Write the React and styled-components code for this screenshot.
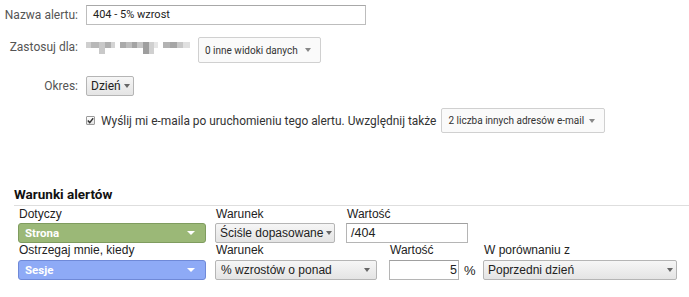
import React from 'react';
import styled, { createGlobalStyle } from 'styled-components';

const Global = createGlobalStyle`
  html, body {
    margin: 0;
    padding: 0;
    background: #fff;
  }
  body {
    font-family: Roboto, "Liberation Sans", Arial, sans-serif;
    width: 689px;
    height: 297px;
    overflow: hidden;
  }
`

const Page = styled.div`
  width: 689px;
  padding-top: 5px;
`
const Form = styled.div`
  display: flex;
  flex-direction: column;
`
const Row = styled.div`
  display: flex;
  align-items: center;
  height: ${p => p.h}px;
  margin-bottom: ${p => p.mb || 0}px;
`
const Label = styled.div`
  width: 78px;
  text-align: right;
  font-size: 12px;
  color: #555;
  margin-right: 8px;
  flex-shrink: 0;
  white-space: nowrap;
  align-self: ${p => p.top ? 'flex-start' : 'auto'};
  padding-top: ${p => p.top ? 3 : 0}px;
`
const TextInput = styled.div`
  width: 280px;
  height: 20px;
  box-sizing: border-box;
  border: 1px solid #bdbdbd;
  border-top-color: #a8a8a8;
  padding: 0 6px;
  font-size: 11px;
  line-height: 18px;
  color: #222;
`
const Blurred = styled.div`
  display: flex;
  align-items: flex-start;
  width: 104px;
  height: 20px;
  margin-right: 8px;
  padding-top: 2px;
  box-sizing: border-box;
`
const Pix = styled.span`
  display: block;
  flex-shrink: 0;
  width: ${p => p.w}px;
  height: ${p => p.h || 6}px;
  background: ${p => p.c};
`
const FlatDrop = styled.div`
  display: flex;
  align-items: center;
  box-sizing: border-box;
  height: ${p => p.h}px;
  width: ${p => p.w}px;
  border: 1px solid #d0d0d0;
  border-radius: 2px;
  background: #fafafa;
  padding: 0 0 0 6px;
  font-size: 10px;
  color: #333;
  white-space: nowrap;
`
const FlatCaret = styled.span`
  margin-left: auto;
  margin-right: 9px;
  width: 0;
  height: 0;
  border-left: 3.5px solid transparent;
  border-right: 3.5px solid transparent;
  border-top: 4px solid #888;
`
const GreyButton = styled.div`
  display: flex;
  align-items: center;
  box-sizing: border-box;
  height: 20px;
  width: ${p => p.w}px;
  padding: 0 ${p => p.pr || 5}px 0 ${p => p.pl || 4}px;
  border: 1px solid #b5b5b5;
  border-radius: 2px;
  background: linear-gradient(#f6f6f6, #e4e4e4);
  color: #222;
  font-size: ${p => p.fs || 12}px;
  white-space: nowrap;
  font-family: ${p => p.roboto ? 'Roboto, sans-serif' : '"Liberation Sans", Arial, sans-serif'};
`
const Caret = styled.span`
  margin-left: ${p => p.push ? 'auto' : '3px'};
  width: 0;
  height: 0;
  border-left: 3.5px solid transparent;
  border-right: 3.5px solid transparent;
  border-top: 4px solid #666;
`
const Check = styled.span`
  display: inline-flex;
  align-items: center;
  justify-content: center;
  width: 9px;
  height: 9px;
  box-sizing: border-box;
  border: 1px solid #9a9a9a;
  background: linear-gradient(#fff, #e2e2e2);
  border-radius: 1px;
  margin-right: 6px;
`
const CheckText = styled.span`
  font-size: 11.9px;
  color: #333;
  margin-right: 5px;
  white-space: nowrap;
`
const Section = styled.div`
  margin-top: 53px;
  padding-left: 14px;
  font-family: "Liberation Sans", Arial, sans-serif;
`
const Heading = styled.div`
  font-family: Roboto, sans-serif;
  font-weight: 700;
  font-size: 13.5px;
  line-height: 16px;
  color: #111;
  padding-bottom: 3px;
  border-bottom: 1px solid #dedede;
`
const Conditions = styled.div`
  padding-left: 4px;
  padding-top: 1px;
`
const CondRow = styled.div`
  display: flex;
  align-items: flex-end;
`
const Group = styled.div`
  display: flex;
  flex-direction: column;
  width: ${p => p.w}px;
  margin-right: ${p => p.mr || 0}px;
`
const CondLabel = styled.div`
  font-size: 12px;
  line-height: 14px;
  color: #222;
  padding-left: 1px;
  margin-bottom: ${p => p.mb || 2}px;
`
const Metric = styled.div`
  display: flex;
  align-items: center;
  box-sizing: border-box;
  height: 20px;
  padding: 0 10px 0 6px;
  border: 1px solid ${p => p.border};
  border-radius: 3px;
  background: ${p => p.bg};
  color: #fff;
  font-family: Roboto, sans-serif;
  font-weight: 700;
  font-size: 11.5px;
`
const WhiteCaret = styled.span`
  margin-left: auto;
  width: 0;
  height: 0;
  border-left: 4px solid transparent;
  border-right: 4px solid transparent;
  border-top: 4px solid #fff;
`
const ValueInput = styled.div`
  box-sizing: border-box;
  height: 20px;
  width: ${p => p.w}px;
  border: 1px solid #b5b5b5;
  border-top-color: #a0a0a0;
  padding: 0 ${p => p.right ? 1 : 3}px 0 4px;
  font-size: 12.5px;
  line-height: 18px;
  color: #222;
  text-align: ${p => p.right ? 'right' : 'left'};
  background: #fff;
`
const Percent = styled.div`
  display: flex;
  align-items: center;
  font-size: 13px;
  color: #222;
  gap: 5px;
`

const bits = [
  ['#cfcfcf', 5], ['#b8b8b8', 8], ['#c9c9c9', 6], ['#b0b0b0', 6], ['#d4d4d4', 4],
  ['#fff', 5], ['#aaaaaa', 6], ['#bdbdbd', 6], ['#a3a3a3', 5], ['#c5c5c5', 6],
  ['#9e9e9e', 6], ['#d0d0d0', 5], ['#e6e6e6', 4], ['#fff', 5], ['#b3b3b3', 7],
  ['#a5a5a5', 7], ['#c7c7c7', 6], ['#e0e0e0', 7],
];

function Blur() {
  return (
    <Blurred>
      {bits.map(([c, w], i) => <Pix key={i} c={c} w={w} h={i === 2 || i === 10 || i === 11 ? 12 : 6} />)}
    </Blurred>
  );
}

export default function App() {
  return (
    <Page>
      <Global />
      <Form>
        <Row h={20} mb={12}>
          <Label>Nazwa alertu:</Label>
          <TextInput>404 - 5% wzrost</TextInput>
        </Row>
        <Row h={26} mb={13}>
          <Label top>Zastosuj dla:</Label>
          <Blur />
          <FlatDrop h={26} w={123}>0 inne widoki danych<FlatCaret /></FlatDrop>
        </Row>
        <Row h={20} mb={12}>
          <Label>Okres:</Label>
          <GreyButton w={48} roboto fs={12} pl={4}>Dzień<Caret /></GreyButton>
        </Row>
        <Row h={25}>
          <Label />
          <Check>
            <svg width="7" height="7" viewBox="0 0 7 7">
              <path d="M0.8 3.6 L2.7 5.6 L6.2 1.2" fill="none" stroke="#333" strokeWidth="1.4" />
            </svg>
          </Check>
          <CheckText>Wyślij mi e-maila po uruchomieniu tego alertu. Uwzględnij także</CheckText>
          <FlatDrop h={25} w={164}>2 liczba innych adresów e-mail<FlatCaret /></FlatDrop>
        </Row>
      </Form>
      <Section>
        <Heading>Warunki alertów</Heading>
        <Conditions>
          <CondRow>
            <Group w={188} mr={9}>
              <CondLabel>Dotyczy</CondLabel>
              <Metric bg="#9bb877" border="#7f9c5f">Strona<WhiteCaret /></Metric>
            </Group>
            <Group w={120} mr={11}>
              <CondLabel mb={2}>Warunek</CondLabel>
              <GreyButton w={120} pl={4} pr={5}>Ściśle dopasowane<Caret /></GreyButton>
            </Group>
            <Group w={122}>
              <CondLabel>Wartość</CondLabel>
              <ValueInput w={122}>/404</ValueInput>
            </Group>
          </CondRow>
          <CondRow>
            <Group w={188} mr={9}>
              <CondLabel mb={3}>Ostrzegaj mnie, kiedy</CondLabel>
              <Metric bg="#8eaaf6" border="#6f89d8">Sesje<WhiteCaret /></Metric>
            </Group>
            <Group w={162} mr={12}>
              <CondLabel mb={3}>Warunek</CondLabel>
              <GreyButton w={162} pl={5} pr={6}>% wzrostów o ponad<Caret push /></GreyButton>
            </Group>
            <Group w={94}>
              <CondLabel mb={3}>Wartość</CondLabel>
              <Percent>
                <ValueInput w={70} right>5</ValueInput>%
              </Percent>
            </Group>
            <Group w={194}>
              <CondLabel mb={3}>W porównaniu z</CondLabel>
              <GreyButton w={194} pl={4} pr={3}>Poprzedni dzień<Caret push /></GreyButton>
            </Group>
          </CondRow>
        </Conditions>
      </Section>
    </Page>
  );
}
